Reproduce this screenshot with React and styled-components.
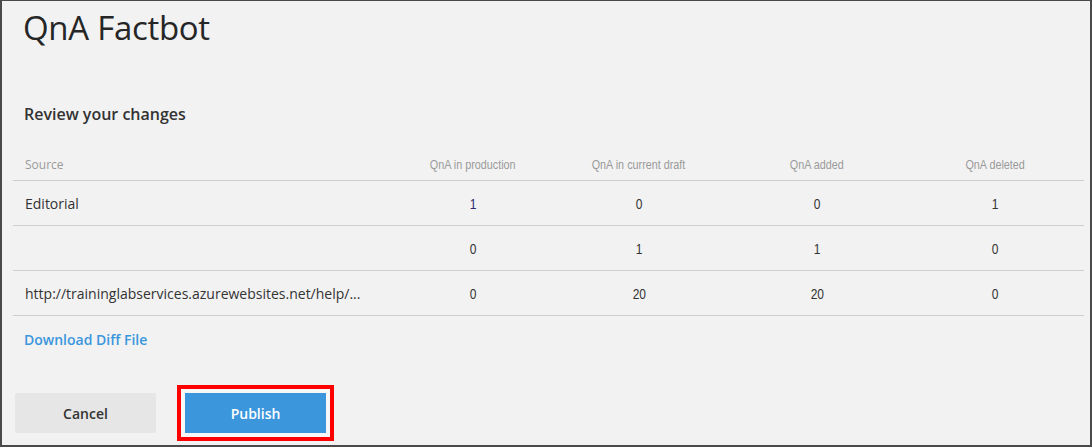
import styled, { createGlobalStyle } from 'styled-components';

const GlobalStyle = createGlobalStyle`
  html, body {
    margin: 0;
    padding: 0;
    background: #f2f2f2;
  }
  body {
    font-family: "Segoe UI", "Open Sans", "Noto Sans", sans-serif;
    color: #333;
  }
`;

const Frame = styled.div`
  box-sizing: border-box;
  width: 1092px;
  height: 447px;
  background: #f2f2f2;
  border: 2px solid #4a4a4a;
  border-top-width: 1px;
  padding: 0 6px 0 11px;
  display: flex;
  flex-direction: column;
`;

const Title = styled.h1`
  margin: 0;
  padding: 5px 0 0 10px;
  font-size: 33px;
  font-weight: 400;
  line-height: 44px;
  letter-spacing: -0.3px;
  color: #262626;
`;

const SectionTitle = styled.h2`
  margin: 53px 0 0 11px;
  font-size: 16px;
  font-weight: 600;
  line-height: 22px;
  color: #333;
`;

const Table = styled.div`
  margin-top: 23px;
  display: grid;
  grid-template-columns: 383px 154px 178px 178px 178px;
`;

const Cell = styled.div`
  display: flex;
  align-items: center;
  justify-content: ${({ $left }) => ($left ? 'flex-start' : 'center')};
  padding-left: ${({ $left }) => ($left ? '12px' : '0')};
  height: ${({ $head }) => ($head ? '32px' : '44px')};
  border-bottom: 1px solid #cfcfcf;
  font-size: ${({ $head }) => ($head ? '12px' : '14px')};
  color: ${({ $head }) => ($head ? '#9a9a9a' : '#333')};
  white-space: nowrap;
  overflow: hidden;
`;

const Narrow = styled.span`
  display: inline-block;
  font-family: "Liberation Sans", Arial, sans-serif;
  font-size: ${({ $head }) => ($head ? '13.5px' : '15px')};
  transform: scaleX(0.8);
  color: ${({ $link }) => ($link ? '#2a2a6e' : 'inherit')};
`;

const DiffLink = styled.a`
  margin: 14px 0 0 11px;
  font-size: 14px;
  font-weight: 600;
  line-height: 20px;
  color: #3a96dd;
  text-decoration: none;
  align-self: flex-start;
`;

const Actions = styled.div`
  display: flex;
  gap: 29px;
  margin: 43px 0 0 2px;
`;

const Button = styled.button`
  box-sizing: border-box;
  width: 141px;
  height: 40px;
  border: none;
  border-radius: ${({ $highlight }) => ($highlight ? '0' : '2px')};
  font-family: inherit;
  font-size: 14px;
  font-weight: 600;
  background: ${({ $primary }) => ($primary ? '#3c96db' : '#e6e6e6')};
  color: ${({ $primary }) => ($primary ? '#fff' : '#333')};
  box-shadow: ${({ $highlight }) =>
    $highlight ? '0 0 0 4px #f7f7f7, 0 0 0 8px #ff0000' : 'none'};
`;

const rows = [
  { source: 'Editorial', values: ['1', '0', '0', '1'], linkFirst: true },
  { source: '', values: ['0', '1', '1', '0'] },
  {
    source: 'http://traininglabservices.azurewebsites.net/help/...',
    values: ['0', '20', '20', '0'],
  },
];

const headers = ['QnA in production', 'QnA in current draft', 'QnA added', 'QnA deleted'];

export default function App() {
  return (
    <>
      <GlobalStyle />
      <Frame>
        <Title>QnA Factbot</Title>
        <SectionTitle>Review your changes</SectionTitle>
        <Table>
          <Cell $head $left>Source</Cell>
          {headers.map((h) => (
            <Cell $head key={h}>
              <Narrow $head>{h}</Narrow>
            </Cell>
          ))}
          {rows.map((row, r) => [
            <Cell $left key={`s${r}`}>{row.source}</Cell>,
            ...row.values.map((v, i) => (
              <Cell key={`${r}-${i}`}>
                <Narrow $link={row.linkFirst && i === 0}>{v}</Narrow>
              </Cell>
            )),
          ])}
        </Table>
        <DiffLink href="#">Download Diff File</DiffLink>
        <Actions>
          <Button>Cancel</Button>
          <Button $primary $highlight>Publish</Button>
        </Actions>
      </Frame>
    </>
  );
}
